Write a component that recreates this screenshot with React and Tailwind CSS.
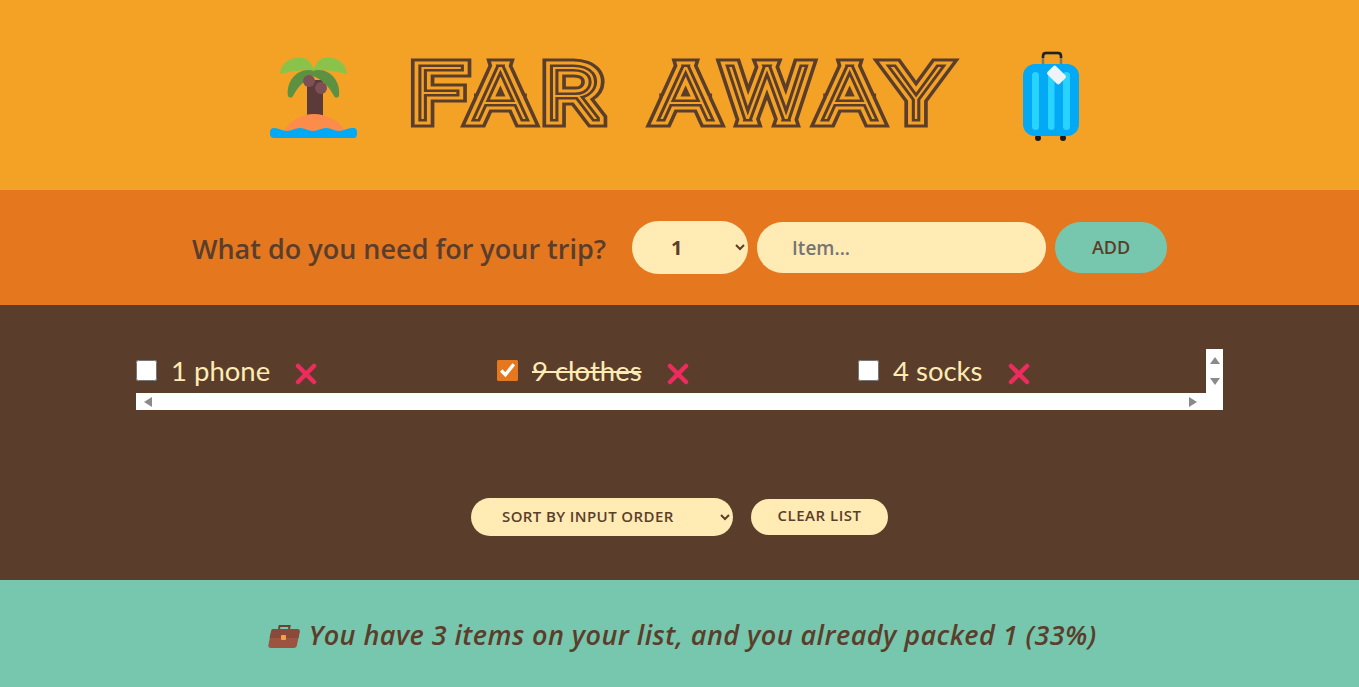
const items = [
  { id: 1, text: "1 phone", packed: false },
  { id: 2, text: "9 clothes", packed: true },
  { id: 3, text: "4 socks", packed: false },
];

function PalmIcon() {
  return (
    <svg width="88" height="84" viewBox="0 0 88 84" className="shrink-0">
      <path d="M37 25h16v37H37z" fill="#5d3a3a" />
      <path d="M10 19C11 6 24 1 33 3c6 1 9 7 12 13C36 14 22 16 10 19z" fill="#8bc34a" />
      <path d="M77 19C76 6 63 1 54 3c-6 1-9 7-11 13 9-2 22 0 34 3z" fill="#8bc34a" />
      <path d="M18 41c-2-14 8-27 22-26 4 0 5 3 4 6-8 3-16 10-21 20-1 2-4 2-5 0z" fill="#5c9142" />
      <path d="M69 41c2-14-8-27-22-26-4 0-5 3-4 6 8 3 16 10 21 20 1 2 4 2 5 0z" fill="#5c9142" />
      <circle cx="39" cy="26" r="6" fill="#7d5055" />
      <circle cx="51" cy="33" r="6" fill="#7d5055" />
      <path d="M14 76c5-10 18-17 30-17s26 7 31 17z" fill="#fb8c4a" />
      <path d="M4 73c5 0 8 3 13 3s8-3 13-3 8 3 13 3 8-3 13-3 8 3 13 3 8-3 13-3h2c2 0 3 2 3 4v2c0 2-1 4-3 4H4c-3 0-4-2-4-4v-2c0-3 2-4 4-4z" fill="#03a9f4" />
    </svg>
  );
}

function LuggageIcon() {
  return (
    <svg width="60" height="92" viewBox="0 0 60 92" className="shrink-0">
      <path d="M23 14V6c0-2 1-3 3-3h12c2 0 3 1 3 3v8" fill="none" stroke="#8a7a5a" strokeWidth="2.5" />
      <path d="M23 8V6c0-2 1-3 3-3h12c2 0 3 1 3 3v2" fill="none" stroke="#222" strokeWidth="2.5" />
      <circle cx="18" cy="88" r="3" fill="#1a1a1a" />
      <circle cx="43" cy="88" r="3" fill="#1a1a1a" />
      <rect x="3" y="14" width="56" height="72" rx="12" fill="#03a9f4" />
      <rect x="12" y="22" width="7" height="58" rx="3.5" fill="#29d3ff" />
      <rect x="28" y="22" width="6.5" height="58" rx="3.2" fill="#29d3ff" />
      <rect x="43" y="22" width="7" height="58" rx="3.5" fill="#29d3ff" />
      <rect x="28" y="19" width="17" height="12" rx="2" transform="rotate(45 36.5 25)" fill="#eef3f7" />
    </svg>
  );
}

function BriefcaseIcon() {
  return (
    <svg width="32" height="26" viewBox="0 0 32 26" className="shrink-0 inline-block align-[-5px] mr-[1px]">
      <path d="M11 5l.6-3h10l-.6 3" fill="none" stroke="#6f3f2f" strokeWidth="2" />
      <path d="M5 5h24c2 0 3 1 2.600 3L29 21c-.4 2-1.500 3-3.500 3H3c-2 0-3-1-2.600-3L3 8c.3-2 1-3 2-3z" fill="#9c5340" />
      <path d="M3 8c.3-2 1-3 2-3h24c2 0 3 1 2.600 3l-1 6H1.500z" fill="#8a4a3a" />
      <rect x="13" y="11" width="5" height="5" rx="1" fill="#f4a340" />
    </svg>
  );
}

function RemoveIcon() {
  return (
    <svg width="22" height="22" viewBox="0 0 22 22" className="shrink-0">
      <path d="M3 3l16 16M19 3L3 19" stroke="#ee2b5e" strokeWidth="4.500" strokeLinecap="round" />
    </svg>
  );
}

export default function App() {
  return (
    <div className="h-[687px] flex flex-col overflow-hidden font-['Open_Sans',sans-serif] text-[#5a3e2b]">
      {/* Logo */}
      <header className="h-[190px] shrink-0 bg-[#f4a226] flex items-center justify-center pr-[9px]">
        <div className="mt-[4px]">
          <PalmIcon />
        </div>
        <h1
          data-text="FAR AWAY"
          className="relative isolate w-[436px] shrink-0 ml-[107px] mr-[119px] scale-x-[1.24] whitespace-nowrap font-['Roboto',sans-serif] font-thin text-[72px] leading-[80px] tracking-[14px] text-[#f4a226] [-webkit-text-stroke:5px_#5a3e2b] [paint-order:stroke_fill] before:content-[attr(data-text)] before:absolute before:left-0 before:top-0 before:-z-20 before:[-webkit-text-stroke:17px_#5a3e2b] after:content-[attr(data-text)] after:absolute after:left-0 after:top-0 after:-z-10 after:[-webkit-text-stroke:11px_#f4a226]"
        >
          FAR AWAY
        </h1>
        <div className="mt-[2px]">
          <LuggageIcon />
        </div>
      </header>

      {/* Add form */}
      <form className="h-[115px] shrink-0 bg-[#e5771f] flex items-center justify-center gap-[9px]">
        <h3 className="mr-[17px] pt-[3px] text-[27px] font-semibold">What do you need for your trip?</h3>
        <select className="w-[116px] h-[53px] rounded-full bg-[#ffebb3] pl-[35px] text-[20px] font-bold text-[#5a3e2b]">
          <option>1</option>
        </select>
        <input
          placeholder="Item..."
          className="w-[289px] h-[51px] rounded-full bg-[#ffebb3] px-[35px] text-[19px] font-semibold text-[#5a3e2b] placeholder:text-[#757575]"
        />
        <button type="button" className="w-[112px] h-[51px] rounded-full bg-[#76c7ad] text-[18px] font-semibold uppercase">
          Add
        </button>
      </form>

      {/* Packing list */}
      <main className="flex-1 bg-[#5a3e2b] flex flex-col items-center pt-[44px] text-[#ffebb3]">
        <div className="w-[1087px] h-[61px] flex flex-col">
          <div className="h-[44px] flex">
            <ul className="flex-1 min-w-0 grid grid-cols-[repeat(3,349px)] gap-x-[12px]">
              {items.map((item) => (
                <li key={item.id} className="flex items-start pt-[11px] h-[44px]">
                  <input
                    type="checkbox"
                    readOnly
                    checked={item.packed}
                    className="w-[21px] h-[21px] m-0 accent-[#e5771f]"
                  />
                  <span className={`ml-[14px] font-['Lato',sans-serif] text-[27.5px] leading-[22px] ${item.packed ? "line-through" : ""}`}>
                    {item.text}
                  </span>
                  <span className="ml-[25px] mt-[3px]">
                    <RemoveIcon />
                  </span>
                </li>
              ))}
            </ul>
            <div className="w-[17px] shrink-0 bg-white flex flex-col items-center justify-between py-[8px]">
              <span className="w-0 h-0 border-x-[5px] border-x-transparent border-b-[7px] border-b-[#8a8a8a]" />
              <span className="w-0 h-0 border-x-[5px] border-x-transparent border-t-[7px] border-t-[#8a8a8a]" />
            </div>
          </div>
          <div className="h-[17px] bg-white flex items-center justify-between pl-[8px] pr-[26px]">
            <span className="w-0 h-0 border-y-[5px] border-y-transparent border-r-[8px] border-r-[#8a8a8a]" />
            <span className="w-0 h-0 border-y-[5px] border-y-transparent border-l-[8px] border-l-[#8a8a8a]" />
          </div>
        </div>

        <div className="mt-[88px] flex items-center gap-[18px] text-[#5a3e2b]">
          <select className="w-[262px] h-[38px] rounded-full bg-[#ffebb3] pl-[27px] pb-[3px] text-[15px] tracking-[0.4px] font-semibold uppercase">
            <option>Sort by input order</option>
          </select>
          <button type="button" className="w-[137px] h-[36px] rounded-full bg-[#ffebb3] pb-[3px] text-[15px] tracking-[0.5px] font-semibold uppercase">
            Clear list
          </button>
        </div>
      </main>

      {/* Stats */}
      <footer className="h-[107px] shrink-0 bg-[#76c7ad] flex items-center justify-center pt-[4px] pl-[6px] text-[27px] tracking-[0.45px] font-semibold italic">
        <p>
          <BriefcaseIcon /> You have 3 items on your list, and you already packed 1 (33%)
        </p>
      </footer>
    </div>
  );
}
